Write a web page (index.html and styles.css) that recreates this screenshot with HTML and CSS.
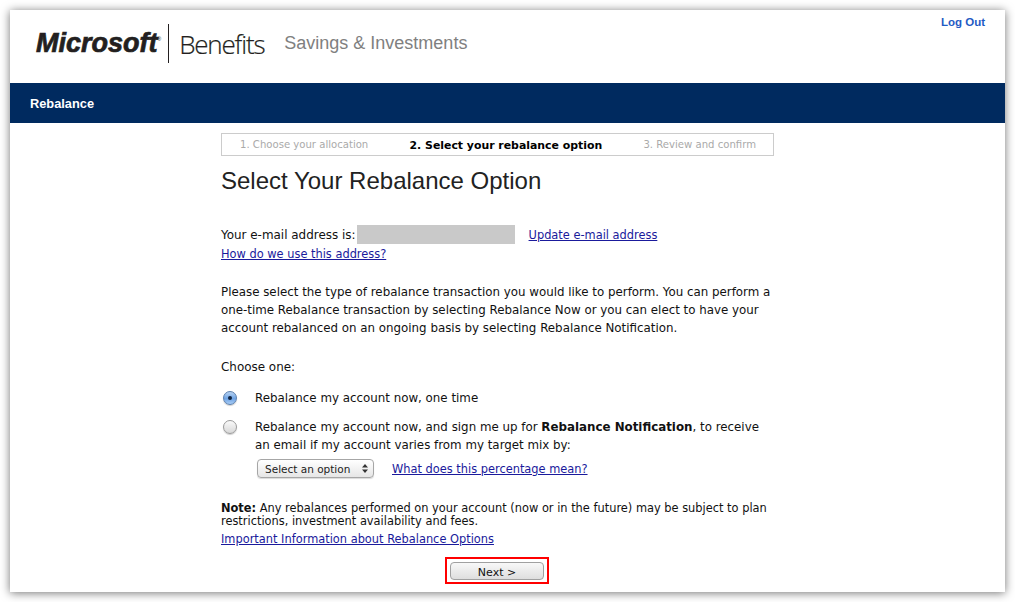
FILE: index.html
```html
<!DOCTYPE html>
<html lang="en">
<head>
    <meta charset="UTF-8">
    <title>Rebalance</title>
    <link rel="stylesheet" href="styles.css">
</head>
<body>

<div class="window">
  <div class="header">
    <div class="logo">
      <span class="ms">Microsoft</span><span class="tm">&reg;</span>
      <span class="logo-rule"></span>
      <span class="benefits">Benefits</span>
    </div>
    <div class="site-name">Savings &amp; Investments</div>
    <a class="logout" href="#">Log Out</a>
  </div>

  <div class="navbar">Rebalance</div>

  <div class="content">
    <div class="steps">
      <span class="step">1. Choose your allocation</span>
      <span class="step current">2. Select your rebalance option</span>
      <span class="step">3. Review and confirm</span>
    </div>

    <h1>Select Your Rebalance Option</h1>

    <div class="email-row">
      <span>Your e-mail address is:</span>
      <span class="redacted"></span>
      <a class="update" href="#">Update e-mail address</a>
    </div>
    <div class="how"><a href="#">How do we use this address?</a></div>

    <p class="intro">Please select the type of rebalance transaction you would like to perform. You can perform a one-time Rebalance transaction by selecting Rebalance Now or you can elect to have your account rebalanced on an ongoing basis by selecting Rebalance Notification.</p>

    <p class="choose">Choose one:</p>

    <div class="option first">
      <span class="radio checked"></span>
      <div class="option-text">Rebalance my account now, one time</div>
    </div>
    <div class="option">
      <span class="radio"></span>
      <div class="option-text">Rebalance my account now, and sign me up for <b>Rebalance Notification</b>, to receive an email if my account varies from my target mix by:</div>
    </div>

    <div class="select-row">
      <div class="select">
        <span>Select an option</span>
        <svg width="6" height="9" viewBox="0 0 6 9"><path d="M3 0L6 3.4H0zM3 9L0 5.6H6z" fill="#333"/></svg>
      </div>
      <a href="#">What does this percentage mean?</a>
    </div>

    <p class="note"><b>Note:</b> Any rebalances performed on your account (now or in the future) may be subject to plan restrictions, investment availability and fees.</p>
    <div class="info"><a href="#">Important Information about Rebalance Options</a></div>

    <div class="actions">
      <div class="highlight"><button class="next">Next &gt;</button></div>
    </div>
  </div>
</div>

</body>
</html>
```

FILE: styles.css
```css
html, body {
	margin: 0;
	height: 602px;
	overflow: hidden;
	background: #fff;
}
body {
	padding: 10px 10px 0;
	box-sizing: border-box;
	font-family: "DejaVu Sans", Verdana, sans-serif;
	font-size: 11.95px;
	color: #111;
}
a {
	color: #1a1a9c;
	font-size: 11.4px;
}
p {
	margin: 0;
}
.window {
	height: 582px;
	background: #fff;
	box-shadow: 0 1px 9px rgba(0, 0, 0, 0.55);
	overflow: hidden;
}

/* Header */
.header {
	position: relative;
	height: 73px;
	display: flex;
	align-items: flex-start;
	padding-left: 26px;
}
.logo {
	display: flex;
	align-items: center;
	height: 39px;
	margin-top: 14px;
	color: #231f20;
	font-family: "Liberation Sans", Arial, sans-serif;
}
.ms {
	font-size: 27px;
	font-weight: bold;
	font-style: italic;
	letter-spacing: 0;
	-webkit-text-stroke: 0.7px #231f20;
}
.tm {
	font-size: 5px;
	align-self: flex-start;
	margin: 12px 0 0 0;
}
.logo-rule {
	width: 1px;
	height: 39px;
	background: #231f20;
	margin: 0 10px 0 7px;
}
.benefits {
	font-size: 26px;
	letter-spacing: -1.2px;
	font-family: "Open Sans", "Liberation Sans", sans-serif;
	font-weight: 300;
	-webkit-text-stroke: 0.2px #231f20;
}
.site-name {
	margin: 22px 0 0 20px;
	font-family: "Liberation Sans", Arial, sans-serif;
	font-size: 18px;
	line-height: 22px;
	color: #808080;
}
.logout {
	position: absolute;
	top: 6px;
	right: 20px;
	font-family: "Liberation Sans", Arial, sans-serif;
	font-size: 11.5px;
	font-weight: bold;
	color: #1f5bc4;
	text-decoration: none;
}
.navbar {
	height: 40px;
	line-height: 41px;
	padding-left: 20px;
	background: #002a5f;
	color: #fff;
	font-family: "Liberation Sans", Arial, sans-serif;
	font-size: 12.8px;
	font-weight: bold;
}

/* Main column */
.content {
	width: 553px;
	margin-left: 211px;
	padding-top: 10px;
	line-height: 18px;
}
.steps {
	display: flex;
	justify-content: space-between;
	box-sizing: border-box;
	height: 23px;
	padding: 0 17px 0 18px;
	border: 1px solid #ccc;
	line-height: 22px;
	font-size: 10.1px;
	color: #aaa;
}
.step.current {
	font-size: 10.9px;
	line-height: 24px;
	font-weight: bold;
	color: #000;
}
h1 {
	margin: 10px 0 0;
	font-family: "Liberation Sans", Arial, sans-serif;
	font-size: 24px;
	font-weight: normal;
	line-height: 30px;
	color: #222;
}
.email-row {
	display: flex;
	align-items: center;
	margin-top: 29px;
	height: 19px;
}
.redacted {
	width: 158px;
	height: 19px;
	margin-left: 1px;
	background: #c9c9c9;
}
.update {
	margin-left: 14px;
}
.how {
	margin-top: 1px;
}
.intro {
	margin-top: 20px;
	font-size: 11.85px;
}
.choose {
	margin-top: 21px;
}
.option {
	display: flex;
	margin-top: 11px;
	font-size: 11.85px;
}
.option.first {
	margin-top: 13px;
}
.radio {
	flex: none;
	box-sizing: border-box;
	width: 14px;
	height: 14px;
	margin: 2px 18px 0 2px;
	border: 1px solid #9a9a9a;
	border-radius: 50%;
	background: linear-gradient(#fafafa, #d8d8d8);
	box-shadow: 0 1px 1px rgba(0, 0, 0, 0.2);
	position: relative;
}
.radio.checked {
	border-color: #5a7fae;
	background: linear-gradient(#b8d3f2, #6ea3e4 55%, #a9cdf5);
}
.radio.checked::after {
	content: "";
	position: absolute;
	left: 4px;
	top: 4px;
	width: 4px;
	height: 4px;
	border-radius: 50%;
	background: #10233f;
}
.option-text {
	flex: 1;
}
.select-row {
	display: flex;
	align-items: center;
	margin: 5px 0 0 36px;
}
.select {
	display: flex;
	align-items: center;
	justify-content: space-between;
	box-sizing: border-box;
	width: 117px;
	height: 19px;
	padding: 0 5px 0 7px;
	margin-right: 18px;
	border: 1px solid #a6a6a6;
	border-radius: 4px;
	background: linear-gradient(#fff, #e6e6e6);
	box-shadow: 0 1px 1px rgba(0, 0, 0, 0.15);
	font-size: 10.5px;
	color: #222;
}
.note {
	margin-top: 24px;
	line-height: 13px;
	font-size: 11.4px;
}
.info {
	margin-top: 2px;
}
.actions {
	display: flex;
	justify-content: center;
	margin-top: 9px;
	padding-right: 1px;
}
.highlight {
	box-sizing: border-box;
	height: 27px;
	padding: 3px 3px;
	border: 2px solid #f00;
}
.next {
	display: block;
	width: 94px;
	height: 18px;
	padding: 4px 0 0;
	border: 1px solid #a0a0a0;
	border-radius: 4px;
	background: linear-gradient(#f8f8f8, #dedede);
	font-family: "DejaVu Sans", Verdana, sans-serif;
	font-size: 11px;
	line-height: 12px;
	color: #111;
}
```
